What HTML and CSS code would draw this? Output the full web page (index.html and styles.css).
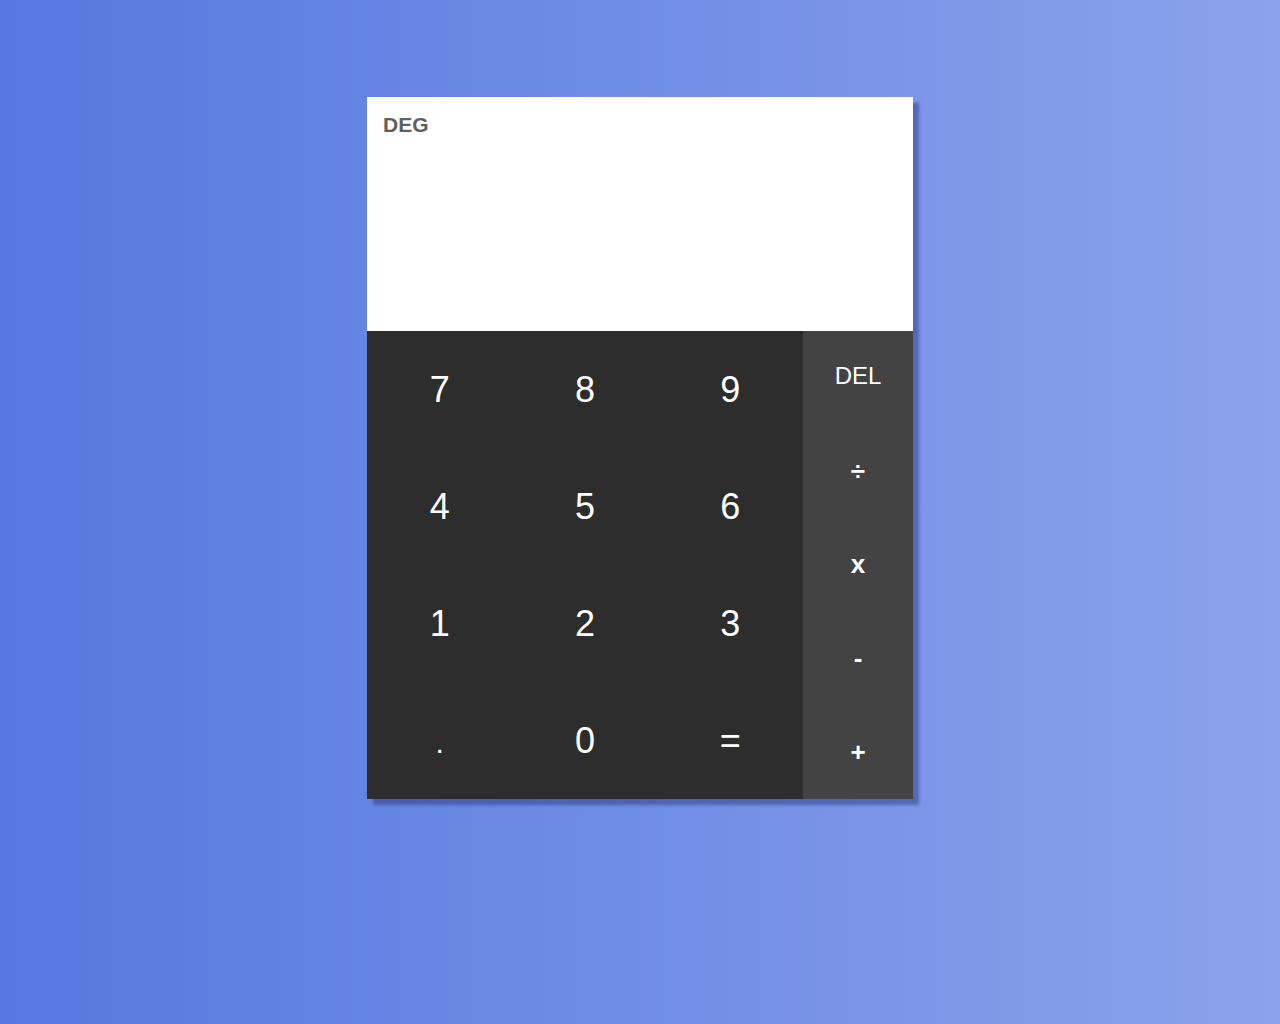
FILE: index.html
```html
<!DOCTYPE html>
<html>
<head>
<meta charset="utf-8">
<link rel="stylesheet" href="styles.css">
</head>
<body>
<div class="calc">
  <div class="display"><span class="mode">DEG</span></div>
  <div class="pad">
    <div class="nums">
      <div class="key">7</div><div class="key">8</div><div class="key">9</div>
      <div class="key">4</div><div class="key">5</div><div class="key">6</div>
      <div class="key">1</div><div class="key">2</div><div class="key">3</div>
      <div class="key dot">.</div><div class="key">0</div><div class="key">=</div>
    </div>
    <div class="ops">
      <div class="op del">DEL</div>
      <div class="op sym">÷</div>
      <div class="op sym">x</div>
      <div class="op sym">-</div>
      <div class="op sym">+</div>
    </div>
  </div>
</div>
</body>
</html>
```
FILE: styles.css
```css
html, body {
  margin: 0;
  height: 100%;
}
body {
  background: linear-gradient(to right, #5678e0, #8ba3ea);
  font-family: "Liberation Sans", Arial, sans-serif;
  padding-top: 97px;
  box-sizing: border-box;
}
.calc {
  width: 546px;
  margin: 0 auto;
  box-shadow: 6px 6px 3px rgba(25, 35, 100, 0.4);
}
.display {
  height: 234px;
  background: #fff;
  padding: 16px 16px;
  box-sizing: border-box;
}
.mode {
  font-weight: bold;
  font-size: 21px;
  color: #5f5f5f;
}
.pad {
  display: flex;
  height: 468px;
}
.nums {
  width: 436px;
  background: #2d2d2d;
  display: grid;
  grid-template-columns: repeat(3, 1fr);
  grid-template-rows: repeat(4, 1fr);
}
.key {
  color: #fff;
  font-size: 36px;
  display: flex;
  align-items: center;
  justify-content: center;
}
.dot {
  font-size: 30px;
  padding-top: 4px;
}
.ops {
  flex: 1;
  background: #434343;
  display: grid;
  grid-template-rows: repeat(5, 1fr);
}
.op {
  color: #fff;
  font-size: 24px;
  display: flex;
  align-items: center;
  justify-content: center;
}
.del {
  padding-bottom: 4px;
}
.sym {
  font-size: 26px;
  font-weight: bold;
}
```
